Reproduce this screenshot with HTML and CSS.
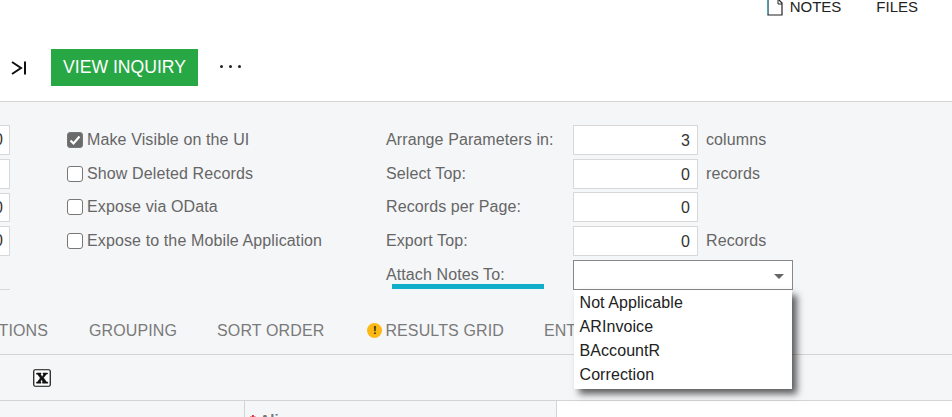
FILE: index.html
```html
<!DOCTYPE html>
<html lang="en">

<head>
    <meta charset="UTF-8">
    <title>Generic Inquiry</title>
    <link rel="stylesheet" href="styles.css">
</head>

<body>
    <header id="header">
        <div class="util-bar">
            <a class="util-link">
                <svg class="note-icon" width="16" height="16" viewBox="0 0 16 16">
                    <path d="M1 -4V15H15V3L11 -1" fill="#fff" stroke="#222" stroke-width="1.2" />
                    <path d="M11 -1V4H15" fill="none" stroke="#222" stroke-width="1" />
                    <path d="M0.8 0V14" stroke="#3cb6c6" stroke-width="1" />
                </svg>
                NOTES
            </a>
            <a class="util-link files-link">FILES</a>
        </div>
        <div class="tool-bar">
            <svg class="last-icon" width="16" height="16" viewBox="0 0 16 16">
                <path d="M1 2L10 8L1 14" fill="none" stroke="#111" stroke-width="2" />
                <path d="M14 1.500V14.500" stroke="#111" stroke-width="2" />
            </svg>
            <button class="view-btn">VIEW INQUIRY</button>
            <div class="more-dots"><span></span><span></span><span></span></div>
        </div>
    </header>

    <main id="contents">
        <section class="form">
            <div class="clip-col">
                <div class="clip-input">0</div>
                <div class="clip-input"></div>
                <div class="clip-input">0</div>
                <div class="clip-input">0</div>
                <div class="clip-line"></div>
            </div>
            <div class="check-col">
                <label class="check-row"><span class="box checked">
                        <svg width="12" height="12" viewBox="0 0 12 12">
                            <path d="M1.500 6.500L4.500 9.500L10.500 2.500" fill="none" stroke="#fff" stroke-width="2.200" />
                        </svg>
                    </span>Make Visible on the UI</label>
                <label class="check-row"><span class="box"></span>Show Deleted Records</label>
                <label class="check-row"><span class="box"></span>Expose via OData</label>
                <label class="check-row"><span class="box"></span>Expose to the Mobile Application</label>
            </div>
            <div class="param-col">
                <div class="param-row">
                    <span class="param-label">Arrange Parameters in:</span>
                    <span class="num-input">3</span>
                    <span class="param-unit">columns</span>
                </div>
                <div class="param-row">
                    <span class="param-label">Select Top:</span>
                    <span class="num-input">0</span>
                    <span class="param-unit">records</span>
                </div>
                <div class="param-row">
                    <span class="param-label">Records per Page:</span>
                    <span class="num-input">0</span>
                </div>
                <div class="param-row">
                    <span class="param-label">Export Top:</span>
                    <span class="num-input">0</span>
                    <span class="param-unit">Records</span>
                </div>
                <div class="param-row">
                    <span class="param-label attach-label">Attach Notes To:</span>
                    <div class="select-box">
                        <span class="select-arrow"></span>
                        <ul class="drop-list">
                            <li>Not Applicable</li>
                            <li>ARInvoice</li>
                            <li>BAccountR</li>
                            <li>Correction</li>
                        </ul>
                    </div>
                </div>
            </div>
        </section>

        <nav class="tabs">
            <span class="tab first-tab">CONDITIONS</span>
            <span class="tab">GROUPING</span>
            <span class="tab">SORT ORDER</span>
            <span class="tab warn-tab"><i class="warn-icon">!</i>RESULTS GRID</span>
            <span class="tab">ENTRY POINT</span>
        </nav>

        <div class="grid-tools">
            <svg width="18" height="18" viewBox="0 0 18 18">
                <rect x="0.750" y="0.750" width="16.500" height="16.500" rx="1.500" fill="#fff" stroke="#111" stroke-width="1.200" />
                <path d="M3.500 4H8V5L7.600 5.400L9.200 8L10.500 5.600L10 5V4H14.500V5H13.500L10.500 8.800L13.500 13H14.800V14.200H9.500V13H10L8.500 10.500L7.200 13H8V14.200H3.500V13H4.500L7.300 9L4.500 5.200H3.500Z" fill="#111" stroke="#111" stroke-width="0.500" />
            </svg>
        </div>

        <div class="grid-head">
            <div class="head-cell caption-cell"><span>Caption</span></div>
            <div class="head-cell alias-cell"><b>*</b> Alias</div>
            <div class="grid-body"></div>
        </div>
    </main>
</body>

</html>
```

FILE: styles.css
```css
* {
    box-sizing: border-box;
}

html,
body {
    margin: 0;
    height: 417px;
    overflow: hidden;
}

body {
    background-color: #f5f6f8;
    font-family: "Liberation Sans", Arial, sans-serif;
    font-size: 16px;
    color: #666;
}

#header {
    height: 102px;
    background-color: #fff;
    border-bottom: 1px solid #d4d4d4;
}

.util-bar {
    display: flex;
    justify-content: flex-end;
    height: 49px;
    padding-right: 34px;
    font-size: 15px;
    line-height: 14px;
    color: #222;
}

.util-link {
    display: flex;
    align-items: flex-start;
    gap: 7px;
}

.files-link {
    margin-left: 35px;
}

.note-icon {
    margin-left: 0;
}

.tool-bar {
    display: flex;
    align-items: center;
    height: 37px;
    padding-left: 11px;
}

.view-btn {
    width: 147px;
    height: 37px;
    margin-left: 24px;
    padding: 0;
    border: none;
    background-color: #28a745;
    color: #fff;
    font-family: inherit;
    font-size: 17.600px;
}

.more-dots {
    display: flex;
    gap: 6px;
    margin-left: 22px;
    margin-top: -2px;
}

.more-dots span {
    width: 3px;
    height: 3px;
    border-radius: 50%;
    background-color: #222;
}

.form {
    display: flex;
    height: 192px;
    padding-top: 23px;
}

.clip-col,
.check-col,
.param-col {
    display: grid;
    grid-auto-rows: 29.750px;
    row-gap: 4px;
}

.clip-col {
    width: 10px;
    overflow: hidden;
    margin-right: 57px;
}

.clip-input {
    width: 60px;
    margin-left: -50px;
    padding-right: 6px;
    border: 1px solid #d8d8d8;
    background-color: #fff;
    text-align: right;
    line-height: 28px;
    color: #333;
}

.clip-line {
    align-self: end;
    height: 1px;
    background-color: #d8d8d8;
}

.check-col {
    width: 319px;
    letter-spacing: 0.120px;
}

.check-row {
    display: flex;
    align-items: center;
    gap: 4px;
}

.box {
    display: flex;
    align-items: center;
    justify-content: center;
    width: 16px;
    height: 16px;
    border: 1px solid #777;
    border-radius: 3px;
    background-color: #fff;
}

.box.checked {
    background-color: #6b6b6b;
}

.param-row {
    display: flex;
    align-items: center;
}

.param-label {
    width: 187px;
    letter-spacing: 0.100px;
}

.attach-label {
    position: relative;
    align-self: flex-start;
    line-height: 29px;
}

/* 注釈の下線 */
.attach-label::after {
    content: "";
    position: absolute;
    left: 6px;
    top: 24px;
    width: 152px;
    height: 5px;
    background-color: #12adc9;
}

.num-input {
    width: 125px;
    height: 30px;
    padding-right: 7px;
    border: 1px solid #d8d8d8;
    background-color: #fff;
    text-align: right;
    line-height: 29px;
    color: #333;
}

.param-unit {
    margin-left: 8px;
    letter-spacing: 0.100px;
}

.select-box {
    position: relative;
    width: 220px;
    height: 30px;
    border: 1px solid #888;
    background-color: #fff;
}

.select-arrow {
    position: absolute;
    right: 8px;
    top: 13px;
    border-top: 5px solid #666;
    border-left: 5px solid transparent;
    border-right: 5px solid transparent;
}

.drop-list {
    position: absolute;
    left: 0;
    top: 29px;
    width: 218px;
    margin: 0;
    padding: 1px 0 2px;
    list-style: none;
    background-color: #fff;
    box-shadow: 5px 5px 7px #000000a0;
    color: #222;
    letter-spacing: 0.080px;
    z-index: 10;
}

.drop-list li {
    height: 24px;
    padding-left: 5.500px;
    line-height: 24px;
}

.tabs {
    display: flex;
    align-items: center;
    gap: 40px;
    height: 61px;
    padding-top: 13px;
    margin-left: -35px;
    border-bottom: 1px solid #d4d4d4;
    color: #7a7a7a;
    letter-spacing: 0.120px;
    white-space: nowrap;
}

.first-tab {
    width: 83px;
    margin-right: 1px;
    text-align: right;
    flex: none;
    direction: rtl;
    overflow: hidden;
}

.warn-tab {
    display: flex;
    align-items: center;
    gap: 3px;
    margin-left: 3px;
}

.warn-icon {
    width: 15px;
    height: 15px;
    border-radius: 50%;
    background-color: #fdb813;
    color: #222;
    font-size: 11px;
    font-style: normal;
    font-weight: bold;
    line-height: 15px;
    text-align: center;
}

.grid-tools {
    display: flex;
    align-items: center;
    height: 46px;
    padding-left: 33px;
    border-bottom: 1px solid #d4d4d4;
}

.grid-head {
    display: flex;
    height: 16px;
    overflow: hidden;
}

.head-cell {
    font-weight: bold;
    color: #777;
    font-size: 15px;
    line-height: 38px;
    white-space: nowrap;
    overflow: hidden;
}

.caption-cell {
    display: flex;
    justify-content: flex-end;
    width: 245px;
    padding-right: 226px;
    border-right: 1px solid #d4d4d4;
}

.alias-cell {
    width: 312px;
    padding-left: 5px;
    border-right: 1px solid #d4d4d4;
}

.alias-cell b {
    color: #d9000d;
}

.grid-body {
    flex: 1;
    background-color: #fff;
}
```
